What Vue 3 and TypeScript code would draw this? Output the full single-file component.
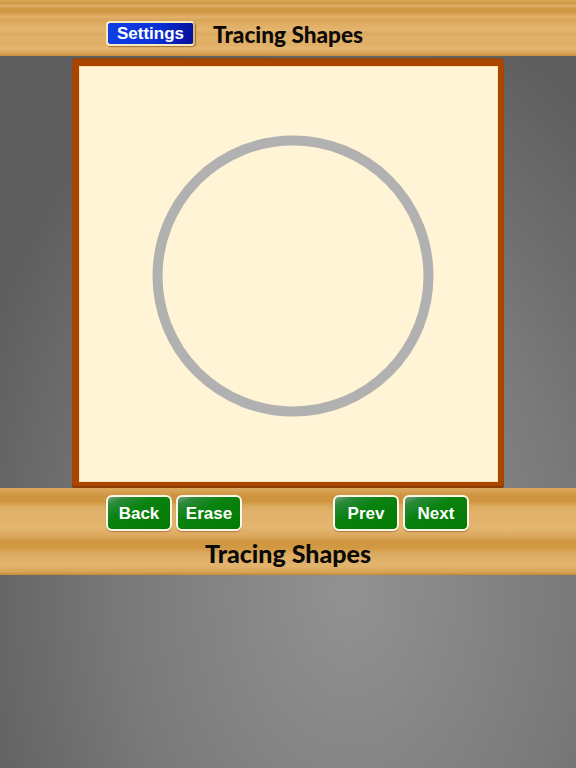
<script setup lang="ts">
const leftButtons: string[] = ['Back', 'Erase']
const rightButtons: string[] = ['Prev', 'Next']
</script>

<template>
  <div class="page">
    <header class="top wood-top">
      <button class="btn blue">Settings</button>
      <h1 class="title">Tracing Shapes</h1>
    </header>
    <main class="board">
      <div class="paper">
        <svg class="shape" width="282" height="282" viewBox="0 0 282 282">
          <circle cx="141" cy="141" r="135.5" fill="none" stroke="#b1b1b1" stroke-width="10" />
        </svg>
      </div>
    </main>
    <footer class="bottom">
      <nav class="controls">
        <div class="group">
          <button v-for="b in leftButtons" :key="b" class="btn green">{{ b }}</button>
        </div>
        <div class="group">
          <button v-for="b in rightButtons" :key="b" class="btn green">{{ b }}</button>
        </div>
      </nav>
      <h2 class="title caption">Tracing Shapes</h2>
    </footer>
  </div>
</template>

<style>
body { margin: 0; }
</style>

<style scoped>
.page {
  width: 576px;
  height: 768px;
  overflow: hidden;
  display: flex;
  flex-direction: column;
  font-family: "Liberation Sans", Arial, sans-serif;
  background: radial-gradient(ellipse 400px 600px at 350px 590px, #929292 0%, #7a7a7a 55%, #5e5e5e 100%);
}
.wood-top {
  background: linear-gradient(180deg,
    #dba95e 0, #cf9640 3px, #e0b06a 6px, #cd943e 9px, #d39a47 13px, #e2b26c 17px,
    #d8a558 20px, #e0ad62 24px, #e3b56f 30px, #dcab61 34px, #e2b26a 38px,
    #e0ae66 44px, #e4b66f 48px, #dfaa5e 52px, #c98d3c 56px);
}
.top {
  height: 56px;
  flex: none;
  display: flex;
  align-items: center;
  padding: 14px 0 0 106px;
  box-sizing: border-box;
  gap: 18px;
}
.title {
  margin: 0;
  font-family: Lato, "Liberation Sans", sans-serif;
  font-weight: 900;
  font-size: 22.6px;
  line-height: 26px;
  color: #0c0a06;
}
.board {
  flex: none;
  align-self: flex-start;
  box-sizing: border-box;
  width: 432px;
  height: 430px;
  margin: 2px 0 0 72px;
  padding: 7px 6px 6px 7px;
  background: #aa4500;
  border-top: 1px solid #96400a;
  border-radius: 5px 5px 3px 3px;
  box-shadow: inset 0 -2px 1px #8f3b06;
}
.paper {
  width: 100%;
  height: 100%;
  background: #fff4d6;
  box-shadow: inset 0 0 0 1px #fbe3b4;
  display: flex;
  justify-content: center;
  align-items: center;
}
.shape { display: block; margin: 4px 0 0 8px; }
.bottom {
  flex: none;
  height: 87px;
  box-sizing: border-box;
  padding-top: 7px;
  background: linear-gradient(180deg,
    #dca85c 0, #d39d4c 5px, #cd933c 8px, #cf963f 14px, #dbaa5f 18px, #e0b26b 24px,
    #e2b36d 30px, #e4b66f 40px, #dca85d 48px, #cf963f 53px, #d19942 60px, #ddac62 66px,
    #e0b06a 72px, #e2b46d 78px, #d8a354 84px, #c48a38 87px);
}
.controls {
  display: flex;
  justify-content: space-between;
  width: 363px;
  margin-left: 106px;
}
.group { display: flex; gap: 4px; }
.btn {
  box-sizing: border-box;
  margin: 0;
  padding: 1px 0 0;
  font-family: "Liberation Sans", Arial, sans-serif;
  font-weight: 700;
  color: #fff;
  cursor: pointer;
}
.green {
  width: 66px;
  height: 36px;
  font-size: 17px;
  border: 2px solid #fdf8e8;
  border-radius: 6px;
  background: linear-gradient(155deg, #7a9f88 0%, #2b8a3a 14%, #0a8210 40%, #037a03 100%);
  box-shadow: 0 1px 1px rgba(90,50,0,.4);
}
.blue {
  width: 89px;
  height: 25px;
  font-size: 17px;
  padding-top: 0;
  border: 2px solid #f6e9c0;
  border-right-color: #d9b67c;
  border-radius: 4px;
  background: linear-gradient(100deg, #0f3fe6 0%, #0a32d8 55%, #04109a 100%);
  box-shadow: 1px 1px 1px rgba(90,50,0,.5);
  margin-bottom: 3px;
}
.caption {
  text-align: center;
  margin-top: 9px;
  font-size: 25px;
}
</style>
